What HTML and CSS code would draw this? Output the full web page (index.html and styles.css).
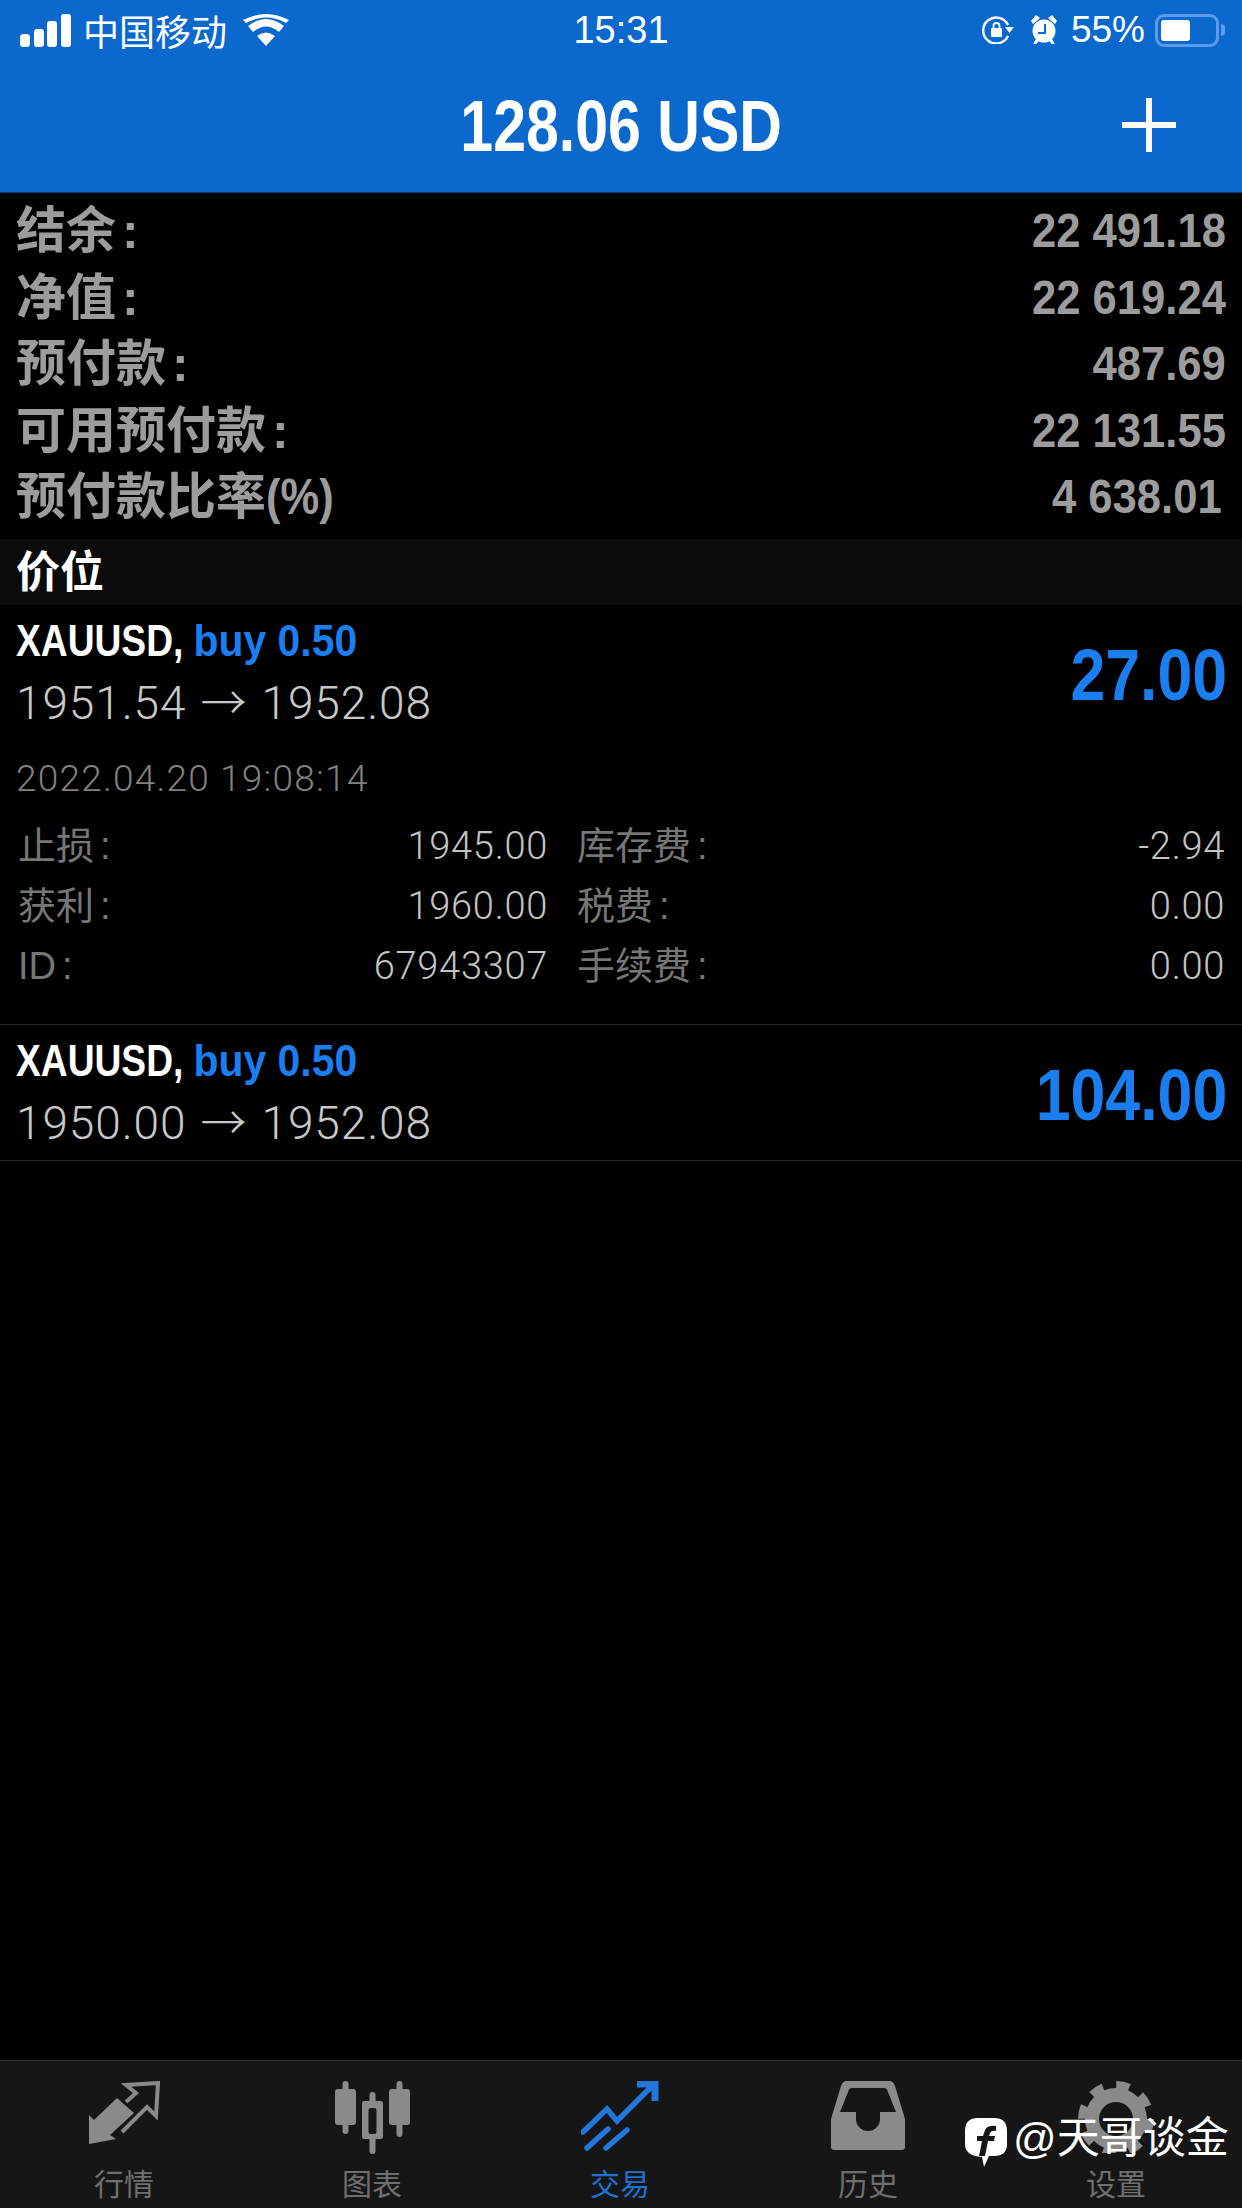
FILE: index.html
```html
<!DOCTYPE html>
<html>
<head>
	<title>交易</title>
	<link rel="stylesheet" href="styles.css">
</head>
<body>
<div class="app">
	<div class="topbar">
		<div class="status">
			<div class="status-left">
				<svg class="signal" width="51" height="33" viewBox="0 0 51 33"><rect x="0" y="20" width="10" height="13" rx="3.500"/><rect x="14" y="15" width="10" height="18" rx="3"/><rect x="27" y="7" width="10" height="26" rx="3"/><rect x="41" y="0" width="10" height="33" rx="3"/></svg>
				<span class="carrier">中国移动</span>
				<svg class="wifi" width="46" height="32" viewBox="0 0 46 32"><path d="M23 32L14 22Q23 15 32 22ZM10 18L5 12Q23-2 41 12L36 18Q23 7 10 18ZM3 9L0 6Q23-6 46 6L43 9Q23-2 3 9Z"/></svg>
			</div>
			<div class="clock">15:31</div>
			<div class="status-right">
				<svg class="ic-lock" width="32" height="28" viewBox="0 0 32 28" fill="none" stroke="#fff" stroke-width="2.400"><path d="M26 9A13 13 0 1 0 26 20"/><path d="M23 11h9l-4.500 6z" fill="#fff" stroke="none"/><rect x="9" y="12" width="11" height="9" rx="1" fill="#fff" stroke="none"/><path d="M11.500 12v-2a3 3 0 0 1 6 0v2" stroke-width="1.800"/></svg>
				<svg class="ic-alarm" width="28" height="30" viewBox="0 0 28 30"><circle cx="14" cy="16" r="11.500" fill="#fff"/><path d="M1 6L6 0L10 3L3 9ZM27 6L22 0L18 3L25 9ZM6 24L3 29H6L9 26ZM22 24L25 29H22L19 26Z" fill="#fff"/><path d="M15 9V18H8" fill="none" stroke="#0b69cd" stroke-width="2"/></svg>
				<span class="pct">55%</span>
				<div class="battery"><div class="battery-fill"></div></div>
				<div class="battery-tip"></div>
			</div>
		</div>
		<div class="navbar">
			<div class="nav-title"><span class="narrow-c">128.06 USD</span></div>
			<svg class="plus" width="54" height="54" viewBox="0 0 54 54"><rect x="0" y="24" width="54" height="6" fill="#fff"/><rect x="24" y="0" width="6" height="54" fill="#fff"/></svg>
		</div>
	</div>

	<div class="summary">
		<div class="sum-row"><span>结余<i>:</i></span><span class="sum-val">22 491.18</span></div>
		<div class="sum-row"><span>净值<i>:</i></span><span class="sum-val">22 619.24</span></div>
		<div class="sum-row"><span>预付款<i>:</i></span><span class="sum-val">487.69</span></div>
		<div class="sum-row"><span>可用预付款<i>:</i></span><span class="sum-val">22 131.55</span></div>
		<div class="sum-row"><span>预付款比率<b class="pct-sign">(%)</b></span><span class="sum-val sum-ratio">4 638.01</span></div>
	</div>

	<div class="section">价位</div>

	<div class="pos pos-open">
		<div class="pos-head">
			<div>
				<div class="pos-name"><span class="narrow-l">XAUUSD, <span class="blue">buy 0.50</span></span></div>
				<div class="pos-price">1951.54 <span class="arrow">→</span> 1952.08</div>
			</div>
			<div class="pos-profit">27.00</div>
		</div>
		<div class="pos-time">2022.04.20 19:08:14</div>
		<div class="details">
			<div class="det"><span class="det-l">止损<i>:</i></span><span>1945.00</span></div>
			<div class="det"><span class="det-l">库存费<i>:</i></span><span>-2.94</span></div>
			<div class="det"><span class="det-l">获利<i>:</i></span><span>1960.00</span></div>
			<div class="det"><span class="det-l">税费<i>:</i></span><span>0.00</span></div>
			<div class="det"><span class="det-l">ID<i>:</i></span><span>67943307</span></div>
			<div class="det"><span class="det-l">手续费<i>:</i></span><span>0.00</span></div>
		</div>
	</div>
	<div class="pos">
		<div class="pos-head">
			<div>
				<div class="pos-name"><span class="narrow-l">XAUUSD, <span class="blue">buy 0.50</span></span></div>
				<div class="pos-price">1950.00 <span class="arrow">→</span> 1952.08</div>
			</div>
			<div class="pos-profit">104.00</div>
		</div>
	</div>

	<div class="spacer"></div>

	<div class="tabbar">
		<div class="tab">
			<svg width="71" height="64" viewBox="0 0 71 64"><path d="M0 34L5 39L28 17L45 32L21 54L27 58L0 63Z" fill="#8a8a8a"/><path d="M37 21L47 12L37 4L69 2L67 35L58 26L33 51" fill="none" stroke="#8a8a8a" stroke-width="4"/></svg>
			<span>行情</span>
		</div>
		<div class="tab">
			<svg width="75" height="73" viewBox="0 0 75 73" fill="#8a8a8a"><rect x="7.500" y="0" width="6" height="53" rx="3"/><rect x="0" y="8" width="21" height="36" rx="3"/><rect x="61.500" y="0" width="6" height="56" rx="3"/><rect x="54" y="8" width="21" height="36" rx="3"/><rect x="34.500" y="11" width="6" height="62" rx="3"/><rect x="27" y="20" width="21" height="38" rx="2"/><rect x="33.500" y="27" width="8" height="26" rx="2" fill="#161616"/></svg>
			<span>图表</span>
		</div>
		<div class="tab tab-on">
			<svg width="78" height="70" viewBox="0 0 78 70" fill="none" stroke="#2277dd" stroke-width="5.500" stroke-linecap="round"><path d="M2 51L26 28L36 40L71 5"/><path d="M56 3H74V20" stroke-linecap="butt" stroke-width="7"/><path d="M6 67L27 48"/><path d="M25 67L46 49"/></svg>
			<span>交易</span>
		</div>
		<div class="tab">
			<svg width="74" height="69" viewBox="0 0 74 69"><path d="M15 0H59Q62 0 64 5L74 38V66Q74 69 71 69H3Q0 69 0 66V38L10 5Q12 0 15 0Z" fill="#8a8a8a"/><path d="M21 7H53Q56 7 57 11L65 31H49V38A12 12 0 0 1 25 38V31H9L17 11Q18 7 21 7Z" fill="#161616"/></svg>
			<span>历史</span>
		</div>
		<div class="tab">
			<svg width="76" height="72" viewBox="0 0 76 72"><circle cx="38" cy="38" r="31" fill="#8a8a8a"/><circle cx="38" cy="38" r="34" fill="none" stroke="#8a8a8a" stroke-width="8" stroke-dasharray="13.350 13.350"/><circle cx="38" cy="38" r="17" fill="#161616"/></svg>
			<span>设置</span>
		</div>
		<div class="watermark">
			<svg width="42" height="49" viewBox="0 0 42 49"><path d="M13 0H29Q42 0 42 13V26Q42 38 29 38H24L19 49L17 39Q0 38 0 26V13Q0 0 13 0Z" fill="#fff"/><path d="M31 8Q21 6 19 15L18 18H12V23H17L14 38H20L23 23H29L30 18H24L25 15Q26 12 31 13Z" fill="#161616"/></svg>
			<span class="wm-text">@天哥谈金</span>
		</div>
	</div>
</div>
</body>
</html>
```

FILE: styles.css
```css
* {
	box-sizing: border-box;
}
body {
	margin: 0;
	background: #000;
	font-family: "Liberation Sans", "Noto Sans CJK SC", sans-serif;
}
i {
	font-style: normal;
	margin-left: 6px;
}
.app {
	width: 1242px;
	height: 2208px;
	display: flex;
	flex-direction: column;
	background: #000;
	overflow: hidden;
}

/* condensed bold text, no narrow font is installed */
.narrow-c, .narrow-l {
	display: inline-block;
	white-space: nowrap;
}
.narrow-c {
	transform: scaleX(.82);
}
.narrow-l {
	transform: scaleX(.845);
	transform-origin: left center;
}

/* top blue part */
.topbar {
	height: 193px;
	background: #0b69cd;
	color: #fff;
	border-bottom: 1px solid #0a3a70;
}
.status {
	height: 60px;
	padding: 0 17px 0 20px;
	display: flex;
	align-items: center;
	justify-content: space-between;
	position: relative;
}
.status-left, .status-right {
	display: flex;
	align-items: center;
}
.signal {
	fill: #fff;
}
.carrier {
	font-size: 36px;
	margin-left: 12px;
	width: 160px;
}
.wifi {
	fill: #fff;
}
.clock {
	position: absolute;
	left: 0;
	right: 0;
	top: 8px;
	text-align: center;
	font-size: 38px;
	line-height: 44px;
}
.ic-lock {
	margin-right: 16px;
}
.ic-alarm {
	margin-right: 13px;
}
.pct {
	font-size: 37px;
	margin-right: 10px;
}
.battery {
	width: 64px;
	height: 33px;
	border: 3px solid #5c9bec;
	border-radius: 9px;
	padding: 3px;
}
.battery-fill {
	width: 29px;
	height: 100%;
	background: #fff;
	border-radius: 3px;
}
.battery-tip {
	width: 4px;
	height: 12px;
	margin-left: 2px;
	background: #5c9bec;
	border-radius: 0 4px 4px 0;
}
.navbar {
	height: 132px;
	display: flex;
	align-items: center;
	position: relative;
}
.nav-title {
	width: 100%;
	text-align: center;
	font-weight: bold;
	font-size: 72px;
}
.plus {
	position: absolute;
	left: 1122px;
	top: 38px;
}

/* account summary */
.summary {
	padding: 0 16px 0 16px;
	height: 346px;
}
.sum-row {
	height: 66.500px;
	display: flex;
	align-items: center;
	justify-content: space-between;
	color: #9c9c9c;
	font-weight: bold;
	font-size: 50px;
}
.sum-val {
	font-size: 49px;
	padding-top: 8px;
	transform: scaleX(.89);
	transform-origin: right center;
}
.sum-ratio {
	margin-right: 4px;
}
.pct-sign {
	display: inline-block;
	transform: scaleX(.87);
	transform-origin: left center;
}
.section {
	height: 66px;
	padding-left: 16px;
	background: #0b0b0b;
	color: #fff;
	font-weight: bold;
	font-size: 44px;
	line-height: 67px;
}

/* positions */
.pos {
	padding: 0 15px 0 16px;
	height: 136px;
	position: relative;
	border-bottom: 1px solid #262626;
}
.pos-open {
	height: 420px;
}
.pos-head {
	display: flex;
	justify-content: space-between;
	align-items: center;
	height: 136px;
}
.pos-name {
	font-weight: bold;
	font-size: 44px;
	line-height: 50px;
	margin-top: 5px;
	color: #fff;
}
.blue {
	display: inline-block;
	color: #1a7ef0;
	transform: scaleX(1.1);
	transform-origin: left center;
}
.pos-price {
	font-family: Roboto, "Liberation Sans", sans-serif;
	font-weight: 300;
	font-size: 46px;
	letter-spacing: .9px;
	line-height: 64px;
	margin-top: 1px;
	color: #c8c8c8;
}
.arrow {
	font-family: "Noto Sans CJK SC", sans-serif;
	font-weight: 300;
	margin: 0 2px;
}
.pos-profit {
	font-weight: bold;
	font-size: 72px;
	color: #1a7ef0;
	transform: scaleX(.87);
	transform-origin: right center;
	padding-top: 4px;
}
.pos-time {
	font-family: Roboto, "Liberation Sans", sans-serif;
	font-weight: 300;
	font-size: 37px;
	letter-spacing: 1.200px;
	color: #808080;
	margin-top: 18px;
	line-height: 40px;
}
.details {
	display: grid;
	grid-template-columns: 532px 650px;
	column-gap: 27px;
	margin-top: 17px;
	font-family: Roboto, "Liberation Sans", "Noto Sans CJK SC", sans-serif;
	font-weight: 300;
	font-size: 38px;
	letter-spacing: .7px;
	line-height: 60px;
	color: #c4c4c4;
}
.det {
	display: flex;
	justify-content: space-between;
	padding-left: 2px;
}
.det-l {
	color: #767676;
	font-weight: 400;
	letter-spacing: 0;
	font-family: "Liberation Sans", "Noto Sans CJK SC", sans-serif;
}
.spacer {
	flex: 1;
}

/* bottom tabs */
.tabbar {
	height: 148px;
	background: #161616;
	border-top: 1px solid #333;
	display: flex;
	position: relative;
}
.tab {
	width: 248px;
	height: 147px;
	display: flex;
	flex-direction: column;
	align-items: center;
	font-size: 30px;
	color: #6f6f6f;
	position: relative;
}
.tab svg {
	margin-top: 20px;
}
.tab span {
	position: absolute;
	left: 0;
	right: 0;
	bottom: 3px;
	line-height: 40px;
	text-align: center;
}
.tab-on {
	color: #1e73d2;
}
.watermark {
	position: absolute;
	left: 965px;
	top: 57px;
	display: flex;
	align-items: flex-start;
	gap: 6px;
	color: #fff;
	font-size: 43px;
}
.wm-text {
	line-height: 44px;
	margin-top: -2px;
}
```
